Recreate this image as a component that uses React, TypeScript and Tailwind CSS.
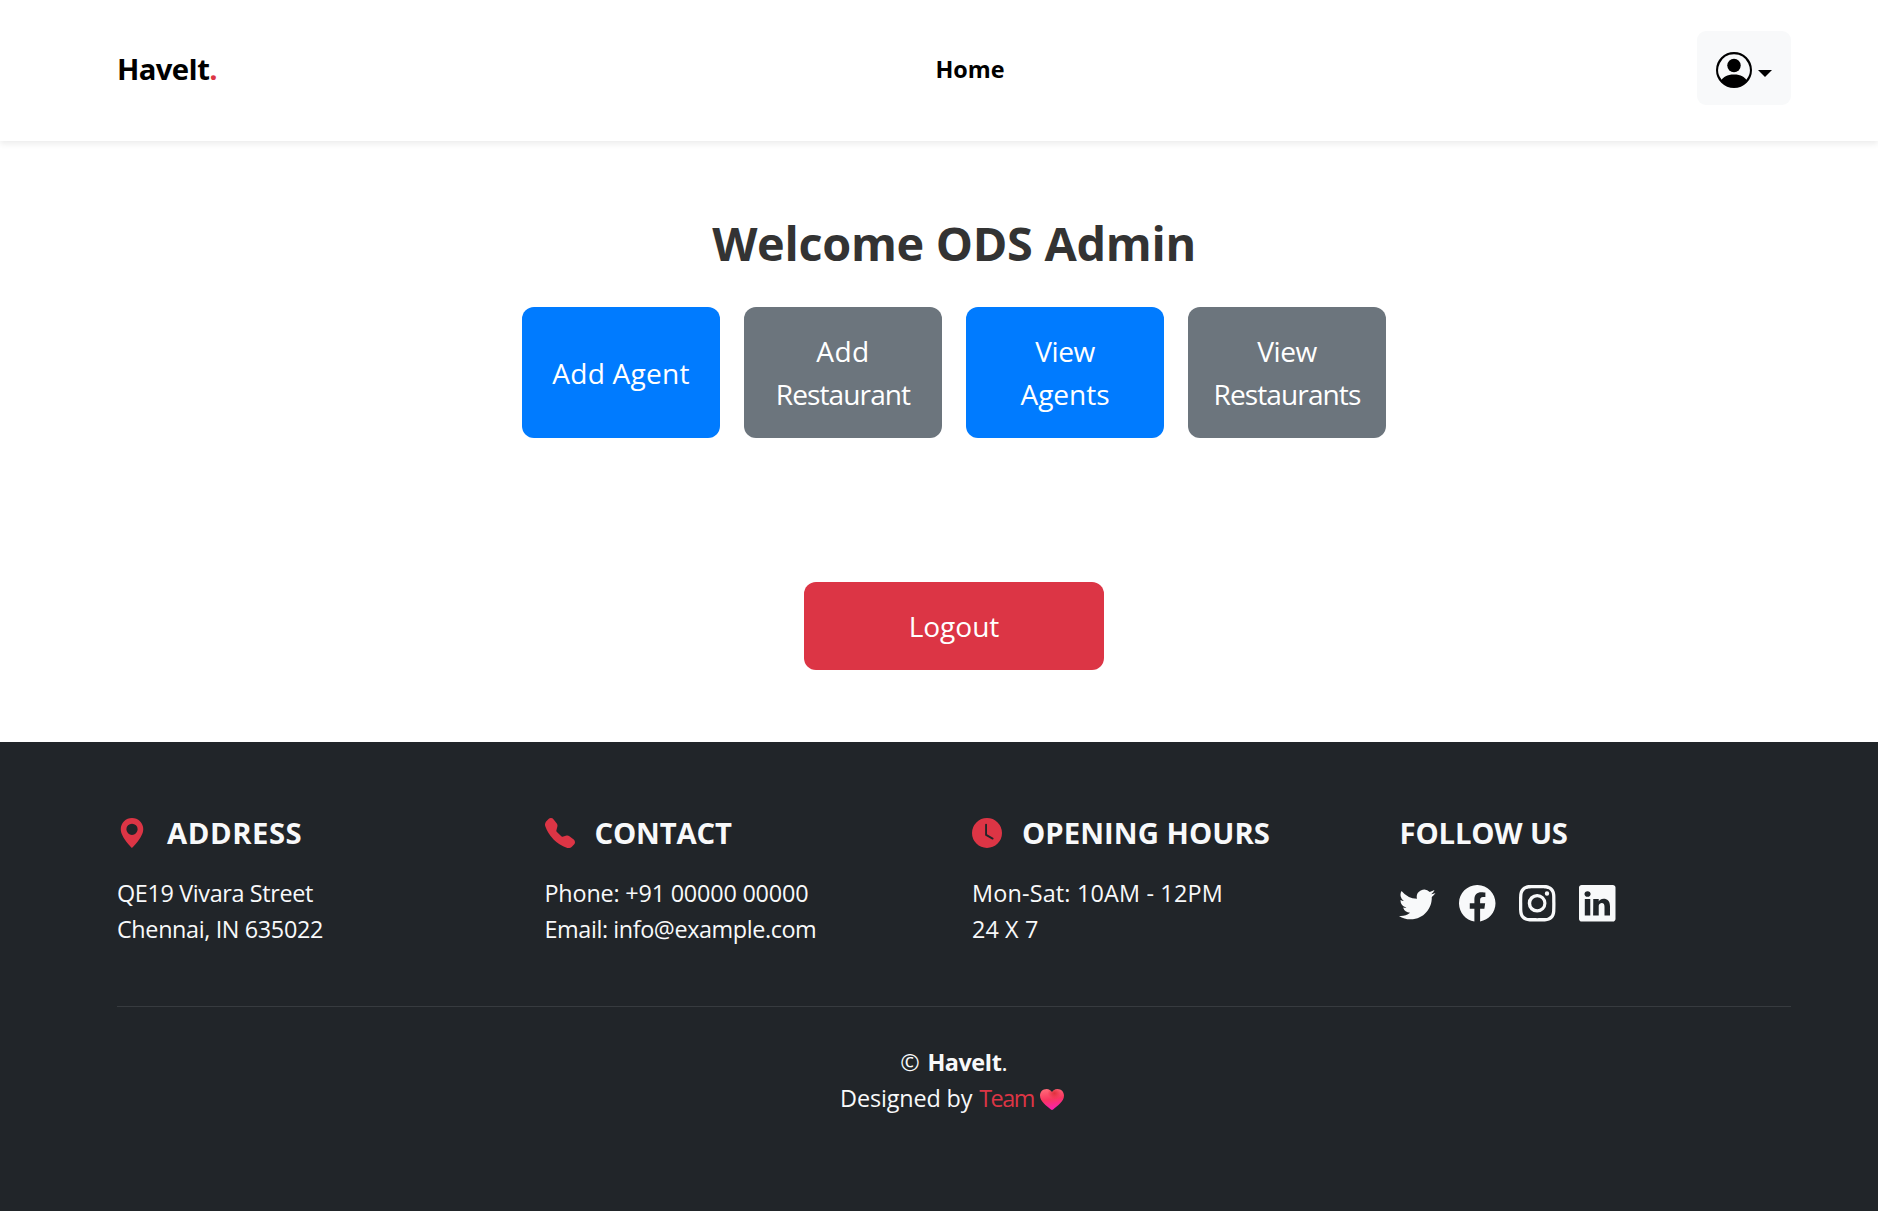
import React from "react";
import {
  BsClockFill,
  BsFacebook,
  BsGeoAltFill,
  BsInstagram,
  BsLinkedin,
  BsPersonCircle,
  BsTelephoneFill,
  BsTwitter,
} from "react-icons/bs";

const heartPath =
  "M6.6 0C9 0 11 1.3 12 3.2C13 1.3 15 0 17.4 0C21.2 0 24 2.8 24 6.5C24 12.6 17.6 16.4 13.1 20.5C12.4 21.1 11.6 21.1 10.9 20.5C6.4 16.4 0 12.6 0 6.5C0 2.8 2.8 0 6.6 0Z";

function Heart() {
  return (
    <svg viewBox="0 0 24 21" className="h-[21px] w-6" aria-label="heart">
      <defs>
        <linearGradient id="heart-base" x1="0.3" y1="0" x2="0.5" y2="1">
          <stop offset="0" stopColor="#ff6a78" />
          <stop offset="0.5" stopColor="#f9365f" />
          <stop offset="1" stopColor="#fb1fb4" />
        </linearGradient>
        <radialGradient id="heart-shade" cx="0.6" cy="0.2" r="0.28">
          <stop offset="0" stopColor="#e0303c" />
          <stop offset="1" stopColor="#e0303c" stopOpacity="0" />
        </radialGradient>
      </defs>
      <path d={heartPath} fill="url(#heart-base)" />
      <path d={heartPath} fill="url(#heart-shade)" />
    </svg>
  );
}

function Header() {
  return (
    <header className="relative flex h-[141px] items-center justify-between bg-white pr-[87px] pl-[117px] shadow-[0_3px_6px_rgba(0,0,0,0.075)]">
      <a className="-mt-0.5 w-[100px] text-[29.25px] leading-[45px] font-bold tracking-[-0.68px] text-black">
        HaveIt<span className="text-[#dc3545]">.</span>
      </a>
      <nav className="-mt-[3px] mr-[-26px] flex flex-1 justify-center">
        <a className="text-[23.4px] leading-9 font-bold tracking-[0.02px] text-black">Home</a>
      </nav>
      <button className="mt-[-5px] flex h-[74px] w-[94px] items-center gap-1.5 rounded-[9px] bg-[#f8f9fa] pt-1 pl-[19px] text-black">
        <BsPersonCircle className="size-9" />
        <span className="mt-1.5 border-x-[7px] border-t-[7px] border-x-transparent border-t-black" />
      </button>
    </header>
  );
}

const actions = [
  { key: "add-agent", color: "bg-[#007bff]", lines: [{ text: "Add Agent", tracking: "tracking-[0.2px]" }] },
  {
    key: "add-restaurant",
    color: "bg-[#6c757d]",
    lines: [
      { text: "Add", tracking: "tracking-[0.4px]" },
      { text: "Restaurant", tracking: "tracking-[-0.93px]" },
    ],
  },
  {
    key: "view-agents",
    color: "bg-[#007bff]",
    lines: [
      { text: "View", tracking: "tracking-[-0.43px]" },
      { text: "Agents", tracking: "tracking-[-0.05px]" },
    ],
  },
  {
    key: "view-restaurants",
    color: "bg-[#6c757d]",
    lines: [
      { text: "View", tracking: "tracking-[-0.43px]" },
      { text: "Restaurants", tracking: "tracking-[-0.93px]" },
    ],
  },
];

function Dashboard() {
  return (
    <main className="flex h-[601px] flex-col items-center pl-[30px] text-white">
      <h1 className="mt-[73px] text-[46.8px] leading-[58px] font-bold tracking-[-0.29px] text-[#333]">
        Welcome ODS Admin
      </h1>
      <div className="mt-[35px] flex gap-6">
        {actions.map((action) => (
          <button
            key={action.key}
            className={`flex h-[131px] w-[198px] flex-col items-center justify-center rounded-xl pt-px text-[28.1px] leading-[43px] ${action.color}`}
          >
            {action.lines.map((line) => (
              <span key={line.text} className={line.tracking}>
                {line.text}
              </span>
            ))}
          </button>
        ))}
      </div>
      <button className="mt-36 flex h-[88px] w-[300px] items-start justify-center rounded-xl bg-[#dc3545] pt-[23px] text-[28.1px] leading-[43px] tracking-[-0.04px]">
        Logout
      </button>
    </main>
  );
}

const columns = [
  {
    title: "ADDRESS",
    titleTracking: "tracking-[0.55px]",
    Icon: BsGeoAltFill,
    lines: [
      { text: "QE19 Vivara Street", tracking: "tracking-[-0.36px]" },
      { text: "Chennai, IN 635022", tracking: "tracking-[-0.36px]" },
    ],
  },
  {
    title: "CONTACT",
    titleTracking: "tracking-[-0.15px]",
    Icon: BsTelephoneFill,
    lines: [
      { text: "Phone: +91 00000 00000", tracking: "tracking-[-0.2px]" },
      { text: "Email: info@example.com", tracking: "tracking-[-0.41px]" },
    ],
  },
  {
    title: "OPENING HOURS",
    titleTracking: "tracking-[0.06px]",
    Icon: BsClockFill,
    lines: [
      { text: "Mon-Sat: 10AM - 12PM", tracking: "tracking-[0.17px]" },
      { text: "24 X 7", tracking: "tracking-[0.1px]" },
    ],
  },
];

const socials = [BsTwitter, BsFacebook, BsInstagram, BsLinkedin];

function Footer() {
  return (
    <footer className="h-[469px] bg-[#212529] pt-[72px] pr-[87px] pl-[117px] text-[23.4px] leading-9 text-[#f8f9fa]">
      <div className="grid h-[193px] grid-cols-[427.5px_427.5px_427.5px_1fr] border-b border-[#373b3f]">
        {columns.map(({ title, titleTracking, Icon, lines }) => (
          <section key={title}>
            <div className="flex h-9 items-center gap-5">
              <Icon className="mt-0.5 size-[30px] text-[#dc3545]" />
              <h2 className={`mt-0.5 text-[29.25px] font-bold whitespace-nowrap ${titleTracking}`}>{title}</h2>
            </div>
            <div className="mt-[25px]">
              {lines.map((line) => (
                <p key={line.text} className={line.tracking}>
                  {line.text}
                </p>
              ))}
            </div>
          </section>
        ))}
        <section>
          <div className="flex h-9 items-center">
            <h2 className="mt-0.5 text-[29.25px] font-bold tracking-[-0.16px]">FOLLOW US</h2>
          </div>
          <div className="mt-[35px] -ml-[0.5px] flex gap-[23.5px]">
            {socials.map((Icon, index) => (
              <Icon key={index} className="size-[36.5px]" />
            ))}
          </div>
        </section>
      </div>
      <div className="flex flex-col items-center pt-[37px]">
        <p>
          © <strong className="ml-[1.5px] font-bold tracking-[-0.5px]">HaveIt</strong>.
        </p>
        <p className="mr-1 flex items-center">
          <span className="tracking-[-0.15px]">Designed by</span>
          <a className="ml-[7px] tracking-[-1.5px] text-[#dc3545]">Team</a>
          <span className="mt-0.5 ml-[6px]">
            <Heart />
          </span>
        </p>
      </div>
    </footer>
  );
}

export default function App() {
  return (
    <div className="min-h-screen bg-white font-['Open_Sans',sans-serif]">
      <Header />
      <Dashboard />
      <Footer />
    </div>
  );
}
